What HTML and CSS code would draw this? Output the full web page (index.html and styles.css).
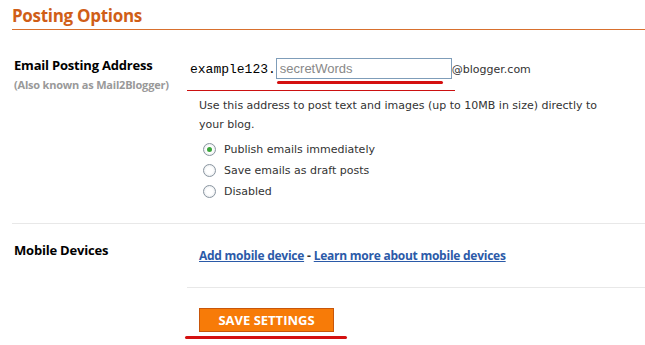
FILE: index.html
```html
<!DOCTYPE html>
<html lang="en">
<head>
  <meta charset="UTF-8" />
  <title>Posting Options</title>
  <link rel="stylesheet" href="styles.css">
</head>
<body>
  <div class="page">
    <h2>Posting Options</h2>

    <div class="row">
      <div class="label-cell">
        <div class="label">Email Posting Address</div>
        <div class="sublabel">(Also known as Mail2Blogger)</div>
      </div>
      <div class="value-cell first">
        <div class="email-line">
          <span class="prefix">example123.</span><span class="input-wrap"><input type="text" class="secret" value="secretWords"></span><span class="domain">@blogger.com</span>
        </div>
        <div class="mark thin"></div>
        <p class="help">Use this address to post text and images (up to 10MB in size) directly to your blog.</p>
        <div class="options">
          <label class="opt"><span class="radio checked"></span>Publish emails immediately</label>
          <label class="opt"><span class="radio"></span>Save emails as draft posts</label>
          <label class="opt"><span class="radio"></span>Disabled</label>
        </div>
      </div>
    </div>

    <div class="row">
      <div class="label-cell plain mobile">
        <div class="label">Mobile Devices</div>
      </div>
      <div class="value-cell second">
        <a href="#">Add mobile device</a> - <a href="#">Learn more about mobile devices</a>
      </div>
    </div>

    <div class="row">
      <div class="label-cell plain"></div>
      <div class="value-cell last">
        <button class="save">SAVE SETTINGS</button>
        <div class="mark thick"></div>
      </div>
    </div>
  </div>
</body>
</html>
```

FILE: styles.css
```css
body {
  margin: 0;
  background-color: #fff;
  font-family: "DejaVu Sans", Verdana, sans-serif;
  color: #333;
}
.page {
  padding-left: 12px;
}
h2 {
  margin: 0;
  padding-top: 4px;
  height: 25px;
  font-family: "Open Sans", "Liberation Sans", sans-serif;
  font-size: 17px;
  font-weight: bold;
  color: #d05e17;
  border-bottom: 1px solid #d8702e;
  letter-spacing: -0.3px;
}
.row {
  display: grid;
  grid-template-columns: 175px 1fr;
}
.label-cell {
  border-bottom: 1px solid #e8e8e8;
  padding-left: 2px;
}
.label-cell.plain {
  border-bottom: none;
}
.label-cell.mobile {
  padding-top: 17px;
}
.label {
  font-family: "Open Sans", "Liberation Sans", sans-serif;
  font-size: 13px;
  font-weight: bold;
  color: #000;
  letter-spacing: -0.2px;
}
.row:first-of-type .label-cell {
  padding-top: 26px;
}
.sublabel {
  font-family: "Open Sans", "Liberation Sans", sans-serif;
  font-size: 11px;
  font-weight: bold;
  color: #999;
  margin-top: 3px;
  letter-spacing: -0.2px;
}
.value-cell {
  border-bottom: 1px solid #e8e8e8;
}
.value-cell.first {
  padding-top: 28px;
  height: 165px;
}
.email-line {
  display: flex;
  align-items: center;
  padding-left: 3px;
  white-space: nowrap;
  font-size: 11px;
}
.prefix {
  font-family: "Liberation Mono", monospace;
  font-size: 13px;
  color: #000;
  padding-top: 2px;
}
.input-wrap {
  position: relative;
  display: inline-block;
}
.input-wrap::after {
  content: "";
  position: absolute;
  left: 1px;
  bottom: -5px;
  width: 166px;
  height: 3px;
  background-color: #d41010;
  border-radius: 2px;
}
.secret {
  display: block;
  width: 168px;
  height: 17px;
  padding: 1px 3px;
  margin: 0;
  border: 1px solid #7f9db9;
  font-family: "Liberation Sans", Arial, sans-serif;
  font-size: 13px;
  color: #888;
}
.domain {
  color: #333;
  padding-top: 2px;
}
.mark {
  background-color: #d41010;
}
.mark.thin {
  width: 268px;
  height: 1px;
  margin-top: 11px;
  background-color: #cc1111;
}
.mark.thick {
  width: 162px;
  height: 3px;
  margin: 4px 0 0 -14px;
  border-radius: 2px;
}
.help {
  margin: 5px 0 0 12px;
  font-size: 11px;
  line-height: 19px;
  color: #333;
  width: 410px;
}
.options {
  margin: 5px 0 0 16px;
}
.opt {
  display: flex;
  align-items: center;
  height: 21px;
  font-size: 11px;
  color: #333;
}
.radio {
  width: 11px;
  height: 11px;
  border: 1px solid #8a95a0;
  border-radius: 50%;
  background: radial-gradient(circle, #fff 40%, #dde2e6 100%);
  margin-right: 8px;
  position: relative;
}
.radio.checked::after {
  content: "";
  position: absolute;
  left: 3px;
  top: 3px;
  width: 5px;
  height: 5px;
  border-radius: 50%;
  background-color: #3aa53a;
}
.value-cell.second {
  height: 63px;
  display: flex;
  align-items: center;
  padding-left: 12px;
  font-family: "Open Sans", "Liberation Sans", sans-serif;
  font-size: 12px;
  font-weight: bold;
  color: #333;
  letter-spacing: -0.25px;
}
.value-cell.second a {
  color: #2b5aa8;
  margin: 0 3px;
}
.value-cell.second a:first-child {
  margin-left: 0;
}
.value-cell.last {
  border-bottom: none;
  padding-top: 20px;
  padding-left: 12px;
}
.save {
  display: block;
  width: 135px;
  height: 24px;
  padding: 0;
  border: 1px solid #c8560a;
  background-color: #f77b08;
  color: #fff;
  font-family: "Open Sans", "Liberation Sans", sans-serif;
  font-size: 13px;
  font-weight: bold;
  cursor: pointer;
}
```
